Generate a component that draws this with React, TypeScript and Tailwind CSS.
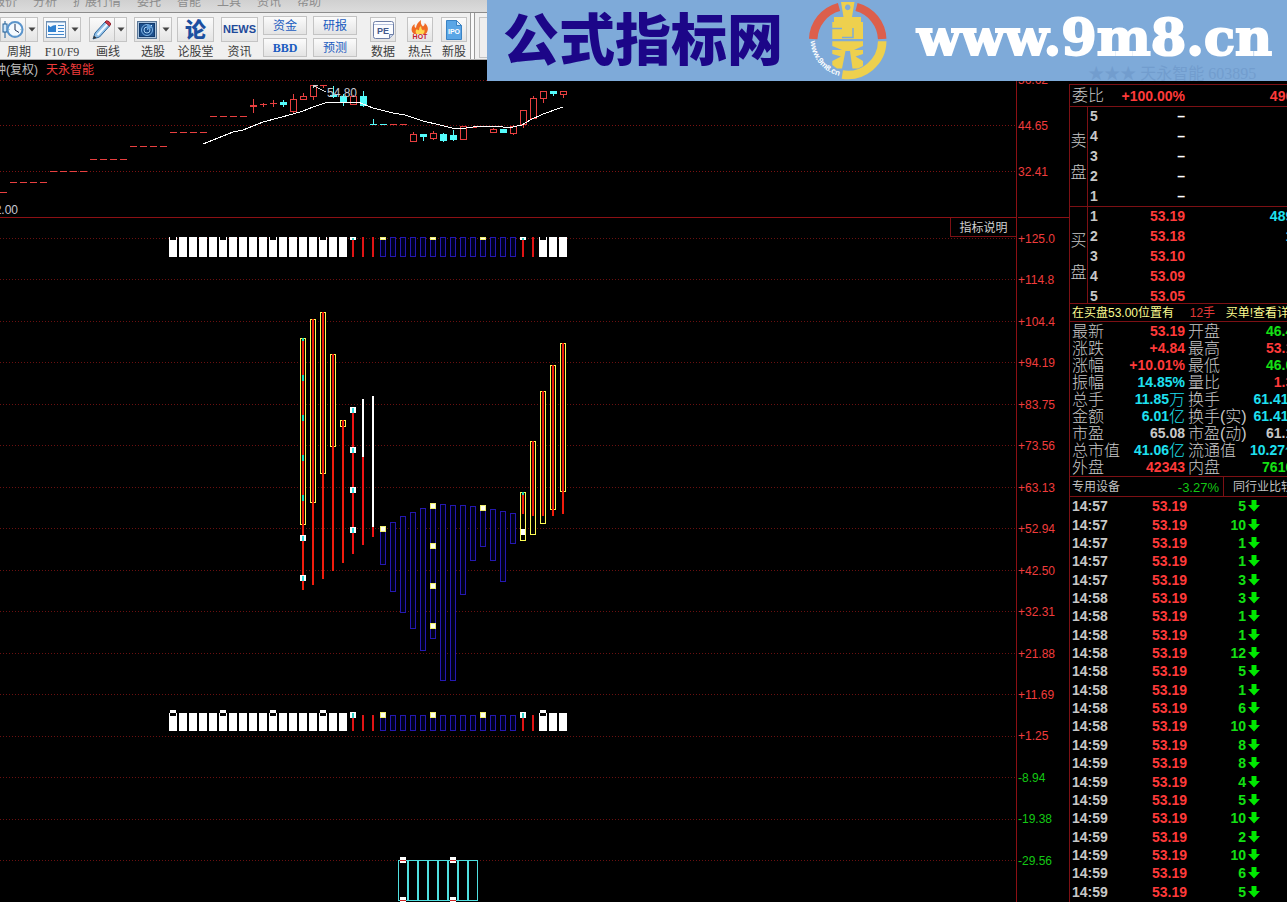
import React from 'react';

const COLORS = {
  grid: '#6a1010',
  candle: '#e84040',
  cyan: '#54fcfc',
  blue: '#2418b0',
  yellow: '#fcfc54',
};

const MENU = ['报价', '分析', '扩展行情', '委托', '智能', '工具', '资讯', '帮助'];

/* ---------- Toolbar ---------- */

const iconBox =
  'flex h-[25px] items-center justify-center border border-[#c4c4c4] bg-gradient-to-b from-[#fbfbfb] to-[#e4e4e4]';

interface ToolProps {
  label: string;
  className?: string;
  dropdown?: boolean;
  wide?: boolean;
  children: React.ReactNode;
}

const Tool: React.FC<ToolProps> = ({ label, className = '', dropdown, wide, children }) => (
  <div className={`flex shrink-0 flex-col items-center ${className}`}>
    <div className="flex">
      <button type="button" aria-label={label} className={`${iconBox} ${wide ? 'w-[37px]' : 'w-[26px]'}`}>
        {children}
      </button>
      {dropdown && (
        <button type="button" aria-label={`${label}菜单`} className={`${iconBox} -ml-px w-[13px]`}>
          <svg width="8" height="5" viewBox="0 0 8 5"><path d="M0.5 0.5h7L4 4.5z" fill="#444" /></svg>
        </button>
      )}
    </div>
    <span className="mt-0.5 text-center text-xs leading-[17px] whitespace-nowrap text-[#3c3c3c]">{label}</span>
  </div>
);

const TextPair: React.FC<{ items: string[]; className?: string }> = ({ items, className = '' }) => (
  <div className={`flex shrink-0 flex-col gap-[3px] ${className}`}>
    {items.map(item => (
      <button
        key={item}
        type="button"
        className={`h-[19px] w-11 border border-[#c4c4c4] bg-gradient-to-b from-[#fbfbfb] to-[#e4e4e4] text-xs leading-4 text-[#1a5cc0] ${item === 'BBD' ? "font-['Liberation_Serif',serif] font-bold" : ''}`}
      >
        {item}
      </button>
    ))}
  </div>
);

const ClockIcon = () => (
  <svg width="22" height="21" viewBox="0 0 22 21" fill="none">
    <path d="M3 2v17" stroke="#1d5c96" />
    <rect x="1" y="5" width="4" height="8" fill="#cfe6fa" stroke="#1d5c96" />
    <circle cx="13" cy="10.500" r="7.500" fill="#f4faff" stroke="#5a94cc" strokeWidth="2" />
    <path d="M13 5v6l4 2.500" stroke="#235" />
    <path d="M13 3.500v1M13 16.500v1M6.500 10.500h1M18.500 10.500h1" stroke="#7ab" />
  </svg>
);

const NewsPageIcon = () => (
  <svg width="20" height="17" viewBox="0 0 20 17" fill="none">
    <rect x="0.500" y="0.500" width="19" height="16" fill="#f4f9ff" stroke="#6d8fb4" />
    <path d="M1 1.500h18" stroke="#a8c4e0" />
    <path d="M2 4l2.500 2L7 4.500 10 4v7H2z" fill="#2f80d0" />
    <path d="M12 4.500h6M12 7.500h6M12 10.500h6M2 13.500h16" stroke="#3f86cc" />
  </svg>
);

const PencilIcon = () => (
  <svg width="20" height="20" viewBox="0 0 20 20" fill="none">
    <path d="M1 19l2-6L13 2l4.500 4L7.500 17z" fill="#8fc0e8" stroke="#34699c" />
    <path d="M5.500 15L15.500 4" stroke="#eef7ff" strokeWidth="2" />
    <path d="M13 2l1.500-1.300q3 .2 4.300 3.300L17.500 6z" fill="#d03a48" stroke="#8d2330" />
    <path d="M1 19l1-3.200 2.600 2z" fill="#333" />
  </svg>
);

const RadarIcon = () => (
  <svg width="20" height="18" viewBox="0 0 20 18" fill="none">
    <rect x="0.500" y="0.500" width="19" height="17" fill="#a9c3de" stroke="#5c7897" />
    <rect x="2.500" y="2.500" width="15" height="13" fill="#1c4f8c" stroke="#123a6b" />
    <circle cx="10" cy="9" r="5.500" stroke="#7fb6e8" />
    <circle cx="10" cy="9" r="3" stroke="#a8d2f5" />
    <path d="M10 9l5-5" stroke="#d8f0ff" />
    <path d="M10 9V3.500q4 0 5.500 3z" fill="#5f9cd6" />
  </svg>
);

const PeIcon = () => (
  <svg width="21" height="18" viewBox="0 0 21 18" fill="none">
    <path d="M2.500 .5h16q2 0 2 2v11l-4 4h-14q-2 0-2-2v-13q0-2 2-2z" fill="#fbfcff" stroke="#6e7fa6" />
    <path d="M1 3.500h19" stroke="#b4c0dc" />
    <path d="M20.500 13.500h-4v4" fill="#c9d4ea" stroke="#6e7fa6" />
    <text x="10" y="13" textAnchor="middle" fontSize="9" fontWeight="700" fill="#41588c" fontFamily="Liberation Sans, sans-serif">PE</text>
  </svg>
);

const HotIcon = () => (
  <svg width="20" height="20" viewBox="0 0 20 20" fill="none">
    <path d="M4 14C0 11 1.500 6 4.500 4q-.5 3 1.500 4Q6.500 3 11 0q-.8 4 2 6.500Q15 5 14.800 3 19 7 17.500 11q-.6 2-2 3z" fill="#f06a24" />
    <path d="M6.500 14q-2-3 .5-5 1 2 2 1 0-3 2-4 0 3 2 4.500 1-.5 1-1.500 1.500 3-1 5z" fill="#ffd850" />
    <text x="10" y="19" textAnchor="middle" fontSize="7" fontWeight="700" fill="#c8202c" fontFamily="Liberation Sans, sans-serif">HOT</text>
  </svg>
);

const IpoIcon = () => (
  <svg width="16" height="20" viewBox="0 0 16 20" fill="none">
    <path d="M.5 .5h10l5 5v14H.5z" fill="#5aa6e6" stroke="#3a83c4" />
    <path d="M10.500 .5v5h5z" fill="#d8ecfc" stroke="#3a83c4" />
    <text x="8" y="14" textAnchor="middle" fontSize="7" fontWeight="700" fill="#fff" fontFamily="Liberation Sans, sans-serif">IPO</text>
  </svg>
);

const Toolbar = () => (
  <header className="bg-[#f0f0f0]">
    <nav className="flex h-[13px] gap-4 overflow-hidden border-b border-[#8c8c8c] bg-gradient-to-b from-[#d0d0d0] to-[#dcdcdc]">
      {MENU.map(item => (
        <button key={item} type="button" className="-mt-1.5 h-4 shrink-0 text-xs leading-4 text-[#8c8c8c] first:-ml-[7px]">
          {item}
        </button>
      ))}
    </nav>
    <div className="flex h-[47px] items-start overflow-hidden border-b border-[#b0b0b0] pt-1">
      <Tool label="周期" dropdown><ClockIcon /></Tool>
      <Tool label="F10/F9" dropdown className="ml-[5px] font-['Liberation_Serif',serif]"><NewsPageIcon /></Tool>
      <Tool label="画线" dropdown className="ml-2"><PencilIcon /></Tool>
      <Tool label="选股" dropdown className="ml-[7px]"><RadarIcon /></Tool>
      <Tool label="论股堂" wide className="ml-[5px]">
        <span className="text-[21px] leading-5 font-black text-[#1b4fa0]">论</span>
      </Tool>
      <Tool label="资讯" wide className="ml-[7px]">
        <span className="text-[11px] font-bold text-[#1f4a9a]">NEWS</span>
      </Tool>
      <TextPair items={['资金', 'BBD']} className="-mt-px ml-[5px]" />
      <TextPair items={['研报', '预测']} className="-mt-px ml-1.5" />
      <Tool label="数据" className="ml-[13px]"><PeIcon /></Tool>
      <Tool label="热点" className="ml-[11px]"><HotIcon /></Tool>
      <Tool label="新股" className="ml-2"><IpoIcon /></Tool>
      <div className="-mt-1 ml-[3px] h-[47px] w-[5px] shrink-0 border-x border-[#9a9a9a] bg-[#fafafa]" />
      <div className="ml-1 h-[41px] w-10 shrink-0 border border-[#c4c4c4] bg-[#eee]" />
    </div>
  </header>
);

/* ---------- Banner ---------- */

const CoinLogo = () => (
  <svg className="ml-[25px] shrink-0" width="80" height="81" viewBox="0 0 80 81" fill="none">
    <path d="M5.200 39A34.500 34.500 0 0 1 31 7" stroke="#dc5f4c" strokeWidth="8.500" />
    <path d="M48.500 7A34.500 34.500 0 0 1 74.200 39" stroke="#dc5f4c" strokeWidth="8.500" />
    <path d="M74.200 41.300A34.500 34 0 0 1 34.300 74.500" stroke="#eed04e" strokeWidth="8.500" />
    <path
      fillRule="evenodd"
      fill="#eed04e"
      d="M33 2H46.500L44 17H53V22H55V39H24.300V22H26V17H35.500zM39.700 4.600a2.800 2.800 0 1 0 .01 0z"
    />
    <path d="M24 28.500h10M34 37.500h11V28" stroke="#7eaad9" strokeWidth="1.500" />
    <path
      fill="#eed04e"
      d="M24.300 41.300H55V46L46 50H55V54L47.500 56.500 55 61V66L50 68.500H44.500L42 51H37.500L34 68.500H29L24.300 65V61L33 56.500 24.300 54V50H34L24.300 46z"
    />
    <path id="coin-rim" d="M2.700 41A37.500 37.500 0 0 0 40 77" />
    <text fontSize="8" fontWeight="700" fill="#fff" fontFamily="Liberation Sans, sans-serif">
      <textPath href="#coin-rim">www.9m8.cn</textPath>
    </text>
  </svg>
);

const Banner = () => (
  <div className="absolute top-0 right-0 left-[487px] flex h-[81px] items-center overflow-hidden bg-[#7eaad9] whitespace-nowrap">
    <span className="ml-4 text-[56px] leading-[76px] font-black text-[#1c0688]">公式指标网</span>
    <CoinLogo />
    <div className="ml-[29px] flex flex-col pt-1.5">
      <a
        href="#"
        className="font-['DejaVu_Serif',serif] text-[51px] leading-[60px] font-bold text-white [-webkit-text-stroke:2px_white]"
      >
        www.9m8.cn
      </a>
      <span className="pr-4 text-right font-['Liberation_Serif','Noto_Sans_CJK_SC',serif] text-base leading-[14px] text-[#729dce]">
        ★★★ 天永智能 603895
      </span>
    </div>
  </div>
);

/* ---------- Candle chart ---------- */

const FLAT_RUNS = [
  { x: 0, y: 192, n: 1 },
  { x: 10, y: 182, n: 4 },
  { x: 50, y: 171, n: 4 },
  { x: 90, y: 159, n: 4 },
  { x: 130, y: 146, n: 4 },
  { x: 170, y: 132, n: 4 },
  { x: 210, y: 116, n: 4 },
];

// [x, high, bodyTop, bodyBottom, low, rising]
const CANDLES: [number, number, number, number, number, boolean][] = [
  [253, 99, 105, 107, 113, true],
  [263, 103, 104, 105, 107, true],
  [273, 100, 103, 104, 107, true],
  [283, 100, 102, 105, 107, false],
  [293, 94, 99, 111, 114, true],
  [303, 93, 96, 99, 100, true],
  [313, 85, 85, 96, 100, true],
  [323, 85, 85, 86, 88, true],
  [333, 86, 95, 97, 98, false],
  [343, 94, 96, 103, 106, false],
  [353, 95, 96, 104, 104, true],
  [363, 91, 96, 106, 107, false],
  [373, 119, 124, 125, 125, false],
  [383, 124, 124, 125, 125, false],
  [393, 124, 124, 124, 125, true],
  [403, 124, 124, 124, 125, true],
  [413, 132, 134, 141, 142, true],
  [423, 134, 134, 137, 141, false],
  [433, 131, 133, 138, 140, true],
  [443, 133, 134, 141, 142, false],
  [453, 130, 135, 140, 141, false],
  [463, 126, 126, 139, 140, true],
  [473, 127, 127, 127, 127, true],
  [493, 128, 129, 132, 133, true],
  [503, 129, 129, 133, 133, false],
  [513, 125, 126, 133, 135, true],
  [523, 110, 110, 124, 128, true],
  [533, 96, 98, 118, 119, true],
  [543, 91, 91, 98, 103, true],
  [553, 91, 91, 94, 96, false],
  [563, 91, 91, 94, 98, true],
];

const AVERAGE =
  '203,144 218,138 233,132 243,130 263,122 278,118 293,114 303,111 313,107 325,103 340,102 358,102 373,108 393,113 405,115 423,121 440,125 452,128 466,128 480,126 498,126 508,128 522,125 530,120 543,114 563,107';

const CandleChart = () => (
  <svg className="block w-full" height="137" shapeRendering="crispEdges">
    <g transform="translate(0,-80)">
      {[80, 125, 171].map(y => (
        <line key={y} x1="0" x2="100%" y1={y + 0.5} y2={y + 0.5} stroke="#7a1212" strokeDasharray="1 2" />
      ))}
      {FLAT_RUNS.map(run =>
        Array.from({ length: run.n }, (_, i) => (
          <rect key={`${run.y}-${i}`} x={run.x + i * 10} y={run.y} width="7" height="1" fill={COLORS.candle} />
        ))
      )}
      {CANDLES.map(([x, high, top, bottom, low, rising]) => {
        const color = rising ? COLORS.candle : COLORS.cyan;
        return (
          <g key={x}>
            <rect x={x} y={high} width="1" height={low - high} fill={color} />
            {rising && bottom - top > 2 ? (
              <rect x={x - 2.5} y={top + 0.5} width="6" height={bottom - top} fill="#000" stroke={color} />
            ) : (
              <rect x={x - 3} y={top} width="7" height={Math.max(1, bottom - top)} fill={color} />
            )}
          </g>
        );
      })}
      <polyline points={AVERAGE} fill="none" stroke="#fff" />
      <path d="M314 86l12 6M313 85h5M313 85v3" stroke="#d0d0d0" fill="none" />
      <g fontSize="12" fill="#c8c8d4" fontFamily="Liberation Sans, sans-serif">
        <text x="327" y="97">54.80</text>
        <text x="-12" y="214">12.00</text>
      </g>
    </g>
  </svg>
);

/* ---------- Indicator chart ---------- */

const GRID_Y = [238, 279, 321, 362, 404, 445, 487, 528, 570, 611, 653, 694, 736, 777, 819, 860];

// [x, boxTop, boxBottom, redTop, redBottom]
const HOT_BARS = [
  [303, 338, 525, 338, 590],
  [313, 319, 503, 319, 585],
  [323, 312, 474, 312, 579],
  [333, 354, 447, 354, 571],
  [343, 420, 427, 420, 563],
  [523, 492, 541, 492, 514],
  [533, 441, 535, 441, 516],
  [543, 391, 524, 391, 516],
  [553, 365, 510, 365, 516],
  [563, 343, 492, 343, 514],
];

const COLD_BARS = [
  [383, 527, 565], [393, 522, 592], [403, 516, 613], [413, 512, 629], [423, 508, 651],
  [433, 505, 639], [443, 504, 681], [453, 505, 681], [463, 505, 595], [473, 506, 561],
  [483, 506, 547], [493, 509, 561], [503, 511, 582], [513, 513, 544],
];

const PLAIN_BARS = [
  { x: 353, top: 407, bottom: 554, fill: '#f01414' },
  { x: 363, top: 399, bottom: 457, fill: '#fff' },
  { x: 363, top: 457, bottom: 545, fill: '#f01414' },
  { x: 373, top: 396, bottom: 527, fill: '#fff' },
  { x: 373, top: 527, bottom: 537, fill: '#f01414' },
];

const Outline: React.FC<{ x: number; top: number; bottom: number; color: string; fill?: string }> = ({ x, top, bottom, color, fill = '#000' }) => (
  <rect x={x - 2.5} y={top + 0.5} width="5" height={bottom - top - 1} fill={fill} stroke={color} />
);

const Marker: React.FC<{ x: number; y: number; h?: number; core: string }> = ({ x, y, h = 6, core }) => (
  <g>
    <rect x={x - 3} y={y} width="6" height={h} fill="#fff" />
    <rect x={x - 1} y={y + 1} width="2" height={h - 1} fill={core} />
  </g>
);

const YellowMarker: React.FC<{ x: number; y: number; h?: number }> = ({ x, y, h = 6 }) => (
  <g>
    <rect x={x - 3} y={y} width="6" height={h} fill="#f0ee70" />
    <rect x={x - 2} y={y + 1} width="4" height={h - 2} fill="#fffff0" />
  </g>
);

const NOTCHED = [0, 5, 10, 15, 37];

const Strip: React.FC<{ top: number; bottom: number; raised?: boolean }> = ({ top, bottom, raised }) => {
  const inner = raised ? top + 2 : top;
  const markY = raised ? top - 1 : top;
  return (
    <g>
      {Array.from({ length: 40 }, (_, i) => {
        const x = 173 + i * 10;
        if (i < 18 || i > 36) {
          const notch = NOTCHED.includes(i);
          return (
            <g key={i}>
              <rect x={x - 4} y={top} width="8" height={bottom - top} fill="#fff" />
              {notch && <rect x={x - 3} y={raised ? top : top - 1} width="6" height={raised ? 3 : 4} fill="#000" />}
              {notch && raised && <rect x={x - 3} y={top - 3} width="6" height="3" fill="#fff" />}
            </g>
          );
        }
        if (i < 21 || i > 34) {
          return (
            <g key={i}>
              <rect x={x - 1} y={inner} width="2" height={bottom - inner} fill="#e01414" />
              {(i === 18 || i === 35) && <Marker x={x} y={markY} h={raised ? 6 : 3} core="#30d0c8" />}
            </g>
          );
        }
        return (
          <g key={i}>
            <Outline x={x} top={inner} bottom={bottom} color={COLORS.blue} fill="#000020" />
            {i % 5 === 1 && <YellowMarker x={x} y={markY} h={raised ? 6 : 3} />}
          </g>
        );
      })}
    </g>
  );
};

const IndicatorChart = () => (
  <svg className="block w-full" height="684" shapeRendering="crispEdges">
    <g transform="translate(0,-218)">
      {GRID_Y.map(y => (
        <line key={y} x1="0" x2="100%" y1={y + 0.5} y2={y + 0.5} stroke={COLORS.grid} strokeDasharray="1 2" />
      ))}
      <Strip top={237} bottom={257} />
      <Strip top={713} bottom={731} raised />
      {HOT_BARS.map(([x, top, bottom, redTop, redBottom]) => (
        <g key={x}>
          <Outline x={x} top={top} bottom={bottom} color={COLORS.yellow} />
          <rect x={x - 1} y={redTop} width="2" height={redBottom - redTop} fill="#f01c0c" />
        </g>
      ))}
      {PLAIN_BARS.map(bar => (
        <rect key={`${bar.x}-${bar.top}`} x={bar.x - 1} y={bar.top} width="2" height={bar.bottom - bar.top} fill={bar.fill} />
      ))}
      {COLD_BARS.map(([x, top, bottom]) => (
        <Outline key={x} x={x} top={top} bottom={bottom} color={COLORS.blue} fill="#000018" />
      ))}
      {[338, 375, 415, 455, 495].map(y => (
        <rect key={y} x="302" y={y} width="2" height={y === 338 ? 3 : 6} fill="#20d8b0" />
      ))}
      {[535, 575].map(y => <Marker key={y} x={303} y={y} core="#30e0e0" />)}
      {[407, 447, 487, 527].map(y => <Marker key={y} x={353} y={y} core="#30e0e0" />)}
      {[503, 543, 583, 623].map(y => <YellowMarker key={y} x={433} y={y} />)}
      <YellowMarker x={383} y={526} />
      <YellowMarker x={483} y={505} />
      <rect x="522" y="492" width="2" height="3" fill="#20d8b0" />
      <rect x="521" y="529" width="4" height="6" fill="#fff" />

      {/* lower signal block */}
      <rect x="398.5" y="860.5" width="79" height="40" fill="none" stroke="#50e0e0" />
      {[407, 417, 427, 437, 447, 457, 467].map(x => (
        <rect key={x} x={x} y="860" width="2" height="41" fill="#50e0e0" />
      ))}
      {[403, 453].map(x => (
        <g key={x}>
          <rect x={x - 3} y="857" width="6" height="6" fill="#fff" />
          <rect x={x - 3} y="860" width="6" height="1" fill="#d02020" />
          <rect x={x - 3} y="897" width="6" height="5" fill="#fff" />
          <rect x={x - 3} y="900" width="6" height="1" fill="#d02020" />
        </g>
      ))}
    </g>
  </svg>
);

const PRICE_AXIS = ['56.62', '44.65', '32.41'];
const INDICATOR_AXIS = [
  '+125.0', '+114.8', '+104.4', '+94.19', '+83.75', '+73.56', '+63.13', '+52.94',
  '+42.50', '+32.31', '+21.88', '+11.69', '+1.25', '-8.94', '-19.38', '-29.56',
];

/* ---------- Quote panel ---------- */

const SELL = [5, 4, 3, 2, 1].map(level => ({ level, price: '–', volume: '' }));
const BUY = [
  { level: 1, price: '53.19', volume: '4896' },
  { level: 2, price: '53.18', volume: '10' },
  { level: 3, price: '53.10', volume: '' },
  { level: 4, price: '53.09', volume: '' },
  { level: 5, price: '53.05', volume: '' },
];

const R = 'text-[#ff3a3a]';
const G = 'text-[#14e014]';
const C = 'text-[#1ee0f0]';
const W = 'text-[#c8c8c8]';

const STATS = [
  ['最新', '53.19', R, '开盘', '46.40', G],
  ['涨跌', '+4.84', R, '最高', '53.19', R],
  ['涨幅', '+10.01%', R, '最低', '46.00', G],
  ['振幅', '14.85%', C, '量比', '1.34', R],
  ['总手', '11.85万', C, '换手', '61.41%', C],
  ['金额', '6.01亿', C, '换手(实)', '61.41%', C],
  ['市盈', '65.08', W, '市盈(动)', '61.19', W],
  ['总市值', '41.06亿', C, '流通值', '10.27亿', C],
  ['外盘', '42343', R, '内盘', '76160', G],
];

const TRADES: [string, number][] = [
  ['14:57', 5], ['14:57', 10], ['14:57', 1], ['14:57', 1], ['14:57', 3],
  ['14:58', 3], ['14:58', 1], ['14:58', 1], ['14:58', 12], ['14:58', 5],
  ['14:58', 1], ['14:58', 6], ['14:58', 10], ['14:59', 8], ['14:59', 8],
  ['14:59', 4], ['14:59', 5], ['14:59', 10], ['14:59', 2], ['14:59', 10],
  ['14:59', 6], ['14:59', 5],
];

interface BookProps {
  side: string;
  rows: { level: number; price: string; volume: string }[];
  className: string;
}

const Book: React.FC<BookProps> = ({ side, rows, className }) => (
  <section className={`flex border-t border-[#7c1014] ${className}`}>
    <div className="flex w-[18px] shrink-0 flex-col items-center gap-4 border-r border-[#7c1014] pt-[26px] text-base leading-4 font-light text-[#c8c8c8]">
      <span>{side}</span>
      <span>盘</span>
    </div>
    <table className="h-[100px] w-[213px] table-fixed text-sm leading-[18px] font-bold">
      <colgroup>
        <col className="w-[20px]" />
        <col className="w-[77px]" />
        <col />
      </colgroup>
      <tbody>
        {rows.map(row => (
          <tr key={row.level} className="h-5">
            <td className="pb-0.5 pl-0.5 text-[#c8c8c8]">{row.level}</td>
            <td className={`pb-0.5 text-right ${row.price === '–' ? 'text-white' : R}`}>{row.price}</td>
            <td className={`pb-0.5 text-right ${C}`}>{row.volume}</td>
          </tr>
        ))}
      </tbody>
    </table>
  </section>
);

const Amount: React.FC<{ value: string }> = ({ value }) => {
  const unit = value.match(/[万亿]$/)?.[0];
  return (
    <span className="flex h-[17px] items-center justify-end">
      {unit ? value.slice(0, -1) : value}
      {unit && <span className="text-base leading-[17px] font-light">{unit}</span>}
    </span>
  );
};

const DownArrow = () => (
  <svg className="ml-0.5" width="12" height="12" viewBox="0 0 12 12">
    <path d="M3.500 0h5v5H12L6 11.500 0 5h3.500z" fill="#00e800" />
  </svg>
);

const QuotePanel = () => (
  <aside className="mt-6 w-[218px] shrink-0 overflow-hidden border-t border-l border-[#7c1014]">
    <div className="w-[231px] whitespace-nowrap">
      <div className="flex h-[21px] items-center text-sm font-bold">
        <div className="flex w-[115px] items-center justify-between pl-0.5">
          <span className="text-base leading-5 font-light text-[#c8c8c8]">委比</span>
          <span className={R}>+100.00%</span>
        </div>
        <span className={`flex-1 text-right ${R}`}>4906</span>
      </div>
      <Book side="卖" rows={SELL} className="h-[100px]" />
      <Book side="买" rows={BUY} className="h-[97px]" />

      <div className="flex h-[18px] border-t border-[#7c1014] bg-black pl-0.5 text-xs leading-[18px] text-[#fcfc90]">
        <span className="w-[118px]">在买盘53.00位置有</span>
        <span className="w-9 text-[#e03838]">12手</span>
        <span>买单!查看详情</span>
      </div>

      <div className="h-[155px] border-t border-[#7c1014] pt-px">
        <table className="w-full table-fixed text-sm leading-[17px]">
          <colgroup>
            <col className="w-[52px]" />
            <col className="w-[63px]" />
            <col className="w-[62px]" />
            <col />
          </colgroup>
          <tbody>
            {STATS.map(([label, value, tone, label2, value2, tone2]) => (
              <tr key={label}>
                <td className="pl-0.5 align-top text-base leading-[17px] font-light text-[#c8c8c8]">
                  <span className="block h-[17px]">{label}</span>
                </td>
                <td className={`align-top font-bold ${tone}`}><Amount value={value} /></td>
                <td className="pl-[3px] align-top text-base leading-[17px] font-light text-[#c8c8c8]">
                  <span className="block h-[17px]">{label2}</span>
                </td>
                <td className={`align-top font-bold ${tone2}`}><Amount value={value2} /></td>
              </tr>
            ))}
          </tbody>
        </table>
      </div>

      <div className="flex h-5 border-t border-[#7c1014] pl-0.5 text-xs leading-[21px] text-[#c0c0c0]">
        <span>专用设备</span>
        <span className="ml-auto pr-1 text-[13px] text-[#14c814]">-3.27%</span>
        <a href="#" className="w-[78px] border-l border-[#7c1014] pl-[9px]">同行业比较</a>
      </div>

      <div className="border-t border-[#7c1014]">
        <table className="h-[404px] w-full table-fixed text-sm leading-[18px] font-bold">
          <colgroup>
            <col className="w-[52px]" />
            <col className="w-[65px]" />
            <col className="w-[73px]" />
            <col />
          </colgroup>
          <tbody>
            {TRADES.map(([time, volume], i) => (
              <tr key={i}>
                <td className={`pl-0.5 ${W}`}>{time}</td>
                <td className={`text-right ${R}`}>53.19</td>
                <td className={G}>
                  <span className="flex items-center justify-end">
                    {volume}
                    <DownArrow />
                  </span>
                </td>
                <td />
              </tr>
            ))}
          </tbody>
        </table>
      </div>
    </div>
  </aside>
);

const App: React.FC = () => (
  <div className="relative min-h-screen overflow-hidden bg-black font-['Liberation_Sans','Noto_Sans_CJK_SC',sans-serif]">
    <Toolbar />
    <main className="flex">
      <div className="min-w-0 flex-1">
        <div className="border-b border-[#8c1014]">
          <h1 className="-ml-1.5 flex h-5 gap-2 text-xs leading-[21px]">
            <span className="text-[#c0c0c0]">钟(复权)</span>
            <span className="text-[#f03c3c]">天永智能</span>
          </h1>
          <CandleChart />
        </div>
        <div className="relative">
          <IndicatorChart />
          <button
            type="button"
            className="absolute top-0 right-0 h-[19px] w-[66px] border-b border-l border-[#7c1014] bg-black pt-0.5 text-xs leading-4 text-[#d0d0d0]"
          >
            指标说明
          </button>
        </div>
      </div>

      <div className="w-[53px] shrink-0 border-l border-[#8c1014] pl-px text-xs text-[#f03c3c]">
        <div className="flex h-[158px] flex-col gap-[26px] border-b border-[#8c1014] pt-2.5">
          {PRICE_AXIS.map(label => <span key={label} className="h-5 leading-5">{label}</span>)}
        </div>
        <div className="mt-3.5 flex h-[636px] flex-col justify-between leading-[14px]">
          {INDICATOR_AXIS.map(label => (
            <span key={label} className={label.startsWith('-') ? 'text-[#14c814]' : ''}>{label}</span>
          ))}
        </div>
      </div>

      <QuotePanel />
    </main>
    <Banner />
  </div>
);

export default App;
